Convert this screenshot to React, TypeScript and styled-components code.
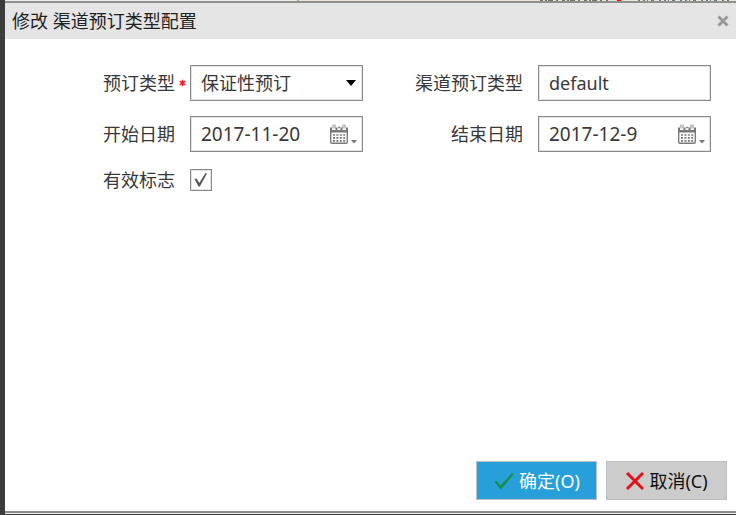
import React, { useState } from "react";
import styled, { createGlobalStyle } from "styled-components";

const GlobalStyle = createGlobalStyle`
  * { box-sizing: border-box; }
  body { margin: 0; background: #3c3c3c; }
  body, button, input, select {
    font-family: "Noto Sans", "Noto Sans CJK SC", sans-serif;
    font-size: 18px;
    line-height: 24px;
    color: #383838;
  }
`;

const Page = styled.div`
  min-height: 100vh;
  padding: 0 0 1px 5px;
  display: flex;
  flex-direction: column;
`;

const Backdrop = styled.div`
  height: 1px;
  flex: none;
  display: grid;
  grid-template-columns: 2fr 3fr;
  background: #eeeeec;
`;

const BackdropPanel = styled.div`
  display: flex;
  justify-content: flex-end;
  background: #eee5d8;
  border-left: 2px solid #aaa;
`;

const Dialog = styled.section`
  flex: 1;
  display: flex;
  flex-direction: column;
  background: #fff;
  border-top: 2px solid #8e918e;
  border-bottom: 1px solid #eee;
`;

const Header = styled.header`
  height: 36px;
  padding: 0 7px;
  display: flex;
  align-items: center;
  justify-content: space-between;
  background: #e5e5e5;
`;

const Title = styled.h1`
  margin: 0;
  font-size: 18px;
  font-weight: 400;
  color: #222;
`;

const CloseButton = styled.button`
  display: flex;
  padding: 0;
  border: 0;
  background: none;
`;

const Form = styled.form`
  flex: 1;
  display: flex;
  flex-direction: column;
`;

const Fields = styled.div`
  flex: 1;
  display: grid;
  grid-template-columns: 1fr 1fr;
  align-content: start;
  row-gap: 15px;
  padding: 26px 25px 16px 10px;
`;

const Field = styled.div<{ $short?: boolean }>`
  min-height: ${(p) => (p.$short ? 26 : 36)}px;
  display: grid;
  grid-template-columns: 175px 1fr;
  align-items: center;
`;

const LabelCell = styled.div`
  display: flex;
  justify-content: flex-end;
  align-items: center;
`;

const Marker = styled.span`
  width: 15px;
  display: flex;
  justify-content: center;
`;

const Control = styled.div`
  height: 36px;
  min-width: 0;
  display: flex;
  align-items: center;
  border: 1px solid #8a8a8a;
  box-shadow: inset 0 0 0 1px #e2e2e2;
  padding-right: 5px;
`;

const TextInput = styled.input<{ $date?: boolean }>`
  flex: 1;
  min-width: 0;
  padding: 0 0 0 10px;
  border: 0;
  outline: 0;
  background: none;
  font-size: ${(p) => (p.$date ? 19 : 18)}px;
`;

const SelectInput = styled.select`
  flex: 1;
  min-width: 0;
  padding: 0 0 0 10px;
  border: 0;
  outline: 0;
  appearance: none;
  background: none;
`;

const IconButton = styled.button`
  display: flex;
  padding: 0;
  border: 0;
  background: none;
`;

const CheckWrap = styled.span`
  display: grid;
  width: 22px;
  height: 22px;

  > * { grid-area: 1 / 1; }
  > svg { pointer-events: none; }
`;

const CheckInput = styled.input`
  appearance: none;
  width: 22px;
  height: 22px;
  margin: 0;
  border: 1px solid #8a8a8a;
  box-shadow: inset 0 0 0 1px #e2e2e2;
`;

const Footer = styled.footer`
  display: flex;
  justify-content: flex-end;
  gap: 9px;
  padding: 0 9px 11px;
  border-bottom: 2px solid #8c8c8c;
`;

const ActionButton = styled.button<{ $primary?: boolean }>`
  min-width: 121px;
  height: 39px;
  padding: 0;
  display: flex;
  align-items: center;
  justify-content: center;
  gap: 4px;
  border: 1px solid #b8c0c4;
  background: ${(p) => (p.$primary ? "#27a0da" : "#ccc")};
  color: ${(p) => (p.$primary ? "#fff" : "#111")};
`;

const BackdropMarks = () => (
  <svg width="200" height="1" viewBox="0 0 200 1" aria-hidden="true">
    <path d="M4 .5h68" stroke="#77726c" strokeDasharray="3 2 2 1 5 3 2 4" />
    <path d="M81 .5h4" stroke="#f00" />
    <path d="M102 .5h92" stroke="#6a7c8c" strokeDasharray="2 3 2 2 1 3 3 5" />
  </svg>
);

const Asterisk = () => (
  <svg width="7" height="8" viewBox="0 0 7 8" aria-hidden="true">
    <path d="M3.5 .8v6.4M.7 2.2l5.6 3.6M6.3 2.2L.7 5.8" stroke="#f21d2b" strokeWidth="1.4" />
  </svg>
);

const CalendarIcon = () => (
  <svg width="28" height="22" viewBox="0 0 28 22" aria-hidden="true">
    <path d="M1.700 7v12q0 1.200 1.200 1.200h14.200q1.200 0 1.200-1.200V7" fill="#fff" stroke="#7b7b7b" strokeWidth="1.400" />
    <path d="M1 4.500h2V7h3.500V4.500h2V7h3V4.500h2V7H17V4.500h2V9.500H1z" fill="#777" />
    <path d="M4 1.500v4M6 1.500v4M14 1.500v4M16 1.500v4" stroke="#888" strokeWidth="1" />
    <path d="M9 4.500h2.500" stroke="#888" strokeWidth="1.500" />
    <path d="M4 12h12.500M4 14.900h12.500M4 17.800h12.500" stroke="#777" strokeWidth="1.700" strokeDasharray="2 1.400" />
    <path d="M22 17h6l-3 3.500z" fill="#777" />
  </svg>
);

const DateField = ({ id, label, initial }: { id: string; label: string; initial: string }) => {
  const [value, setValue] = useState(initial);
  return (
    <Field>
      <LabelCell>
        <label htmlFor={id}>{label}</label>
        <Marker />
      </LabelCell>
      <Control>
        <TextInput $date id={id} value={value} onChange={(e) => setValue(e.target.value)} />
        <IconButton type="button" aria-label={`选择${label}`}>
          <CalendarIcon />
        </IconButton>
      </Control>
    </Field>
  );
};

export default function App() {
  return (
    <>
      <GlobalStyle />
      <Page>
        <Backdrop>
          <span />
          <BackdropPanel>
            <BackdropMarks />
          </BackdropPanel>
        </Backdrop>
        <Dialog role="dialog" aria-labelledby="dialog-title">
          <Header>
            <Title id="dialog-title">修改 渠道预订类型配置</Title>
            <CloseButton type="button" aria-label="关闭">
              <svg width="12" height="12" viewBox="0 0 12 12" aria-hidden="true">
                <path d="M1.500 1.500l9 9M10.500 1.500l-9 9" stroke="#999" strokeWidth="3" />
              </svg>
            </CloseButton>
          </Header>
          <Form onSubmit={(e) => e.preventDefault()}>
            <Fields>
              <Field>
                <LabelCell>
                  <label htmlFor="type">预订类型</label>
                  <Marker><Asterisk /></Marker>
                </LabelCell>
                <Control>
                  <SelectInput id="type" required>
                    <option>保证性预订</option>
                  </SelectInput>
                  <svg width="12" height="6" viewBox="0 0 12 6" aria-hidden="true">
                    <path d="M1 0h10L6 6z" fill="#000" />
                  </svg>
                </Control>
              </Field>
              <Field>
                <LabelCell>
                  <label htmlFor="channel">渠道预订类型</label>
                  <Marker />
                </LabelCell>
                <Control>
                  <TextInput id="channel" defaultValue="default" />
                </Control>
              </Field>
              <DateField id="start" label="开始日期" initial="2017-11-20" />
              <DateField id="end" label="结束日期" initial="2017-12-9" />
              <Field $short>
                <LabelCell>
                  <label htmlFor="valid">有效标志</label>
                  <Marker />
                </LabelCell>
                <CheckWrap>
                  <CheckInput id="valid" type="checkbox" defaultChecked />
                  <svg width="22" height="22" viewBox="0 0 22 22" aria-hidden="true">
                    <path d="M4.500 10l2-.5 2.800 4.500L15.500 4l1.500.5L9.800 17.500H8.500z" fill="#555" />
                  </svg>
                </CheckWrap>
              </Field>
            </Fields>
            <Footer>
              <ActionButton $primary type="submit">
                <svg width="22" height="20" viewBox="0 0 22 20" aria-hidden="true">
                  <path d="M1.500 11l2-1.200 4 4.700L19 2l1.800 1.200L7.800 18.500z" fill="#158f4c" />
                </svg>
                确定(O)
              </ActionButton>
              <ActionButton type="button">
                <svg width="20" height="20" viewBox="0 0 20 20" aria-hidden="true">
                  <path d="M2 2l16 16M18 2L2 18" stroke="#e3101c" strokeWidth="3" />
                </svg>
                取消(C)
              </ActionButton>
            </Footer>
          </Form>
        </Dialog>
      </Page>
    </>
  );
}
